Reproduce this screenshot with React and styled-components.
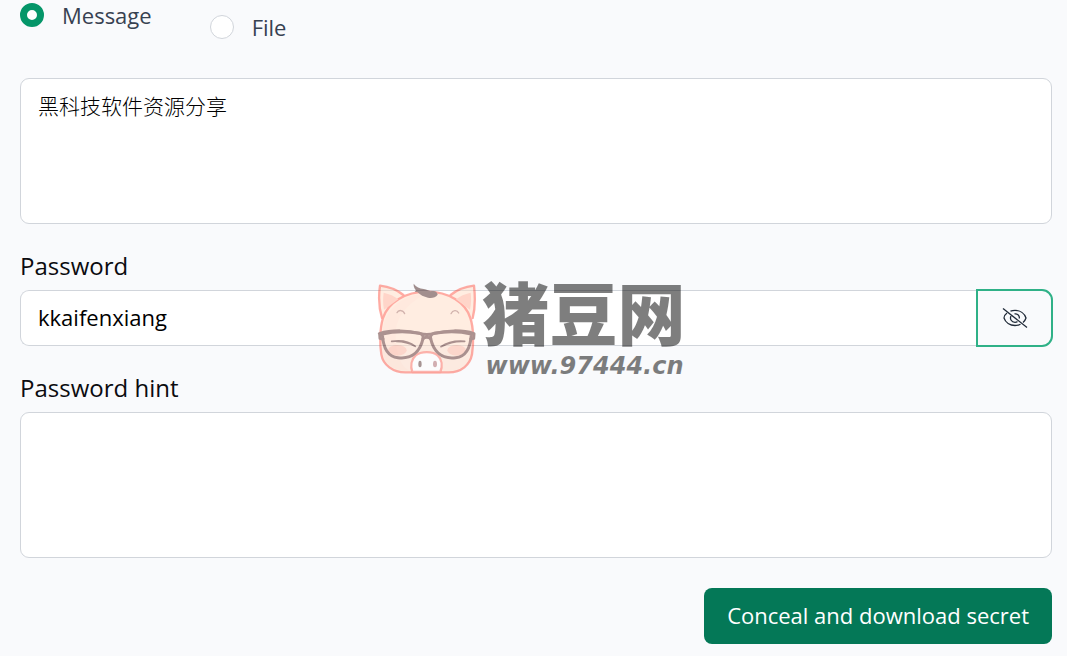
import { useState } from 'react';
import styled, { createGlobalStyle } from 'styled-components';

const GlobalStyle = createGlobalStyle`
  * {
    box-sizing: border-box;
  }

  body {
    margin: 0;
    background-color: #f9fafc;
    font-family: 'Open Sans', 'Noto Sans', 'Noto Sans CJK SC', sans-serif;
  }
`;

const Page = styled.main`
  position: relative;
  min-height: 100vh;
  padding: 0 15px 12px 20px;
  color: #0b0b0f;
`;

const Form = styled.form`
  display: flex;
  flex-direction: column;
`;

const RadioRow = styled.div`
  display: flex;
  align-items: flex-start;
  gap: 58px;
  height: 78px;
`;

const RadioLabel = styled.label`
  display: flex;
  align-items: center;
  gap: 18px;
  margin-top: ${props => (props.$lowered ? '12px' : '0')};
  font-size: 22px;
  line-height: 30px;
  color: #374151;
  cursor: pointer;
`;

const Radio = styled.input`
  appearance: none;
  width: 24px;
  height: 24px;
  margin: 0;
  border: 1px solid #d1d5db;
  border-radius: 50%;
  background-color: white;

  &:checked {
    border: 7px solid #059669;
  }
`;

const TextArea = styled.textarea`
  display: block;
  width: 100%;
  height: 146px;
  padding: 10px 17px;
  border: 1px solid #d1d5db;
  border-radius: 9px;
  background-color: white;
  color: black;
  font-family: 'Noto Sans CJK SC', sans-serif;
  font-size: 21px;
  font-weight: 300;
  line-height: 32px;
  resize: none;
  outline: none;
`;

const FieldLabel = styled.label`
  margin-top: 24px;
  margin-bottom: 6px;
  font-size: 24px;
  line-height: 36px;
`;

const PasswordRow = styled.div`
  display: flex;
  align-items: center;
  height: 56px;
`;

const PasswordInput = styled.input`
  flex: 1;
  min-width: 0;
  height: 56px;
  padding: 0 17px 2px;
  border: 1px solid #d1d5db;
  border-right: none;
  border-radius: 9px 0 0 9px;
  background-color: white;
  color: black;
  font-family: inherit;
  font-size: 22px;
  outline: none;
`;

const ToggleButton = styled.button`
  display: flex;
  align-items: center;
  justify-content: center;
  width: 77px;
  height: 58px;
  margin-right: -1px;
  padding: 0;
  border: 2px solid #2fb187;
  border-radius: 0 11px 11px 0;
  background-color: #f9fafc;
  color: #1f2937;
  cursor: pointer;
`;

const SubmitButton = styled.button`
  align-self: flex-end;
  height: 56px;
  margin-top: 30px;
  padding: 0 23px 2px;
  border: none;
  border-radius: 8px;
  background-color: #047857;
  color: white;
  font-family: inherit;
  font-size: 22px;
  cursor: pointer;

  &:hover {
    background-color: #065f46;
  }
`;

const Watermark = styled.div`
  position: absolute;
  inset: 0;
  display: flex;
  align-items: center;
  justify-content: center;
  padding-top: 4px;
  opacity: 0.5;
  color: black;
  pointer-events: none;
`;

const WatermarkText = styled.div`
  display: flex;
  flex-direction: column;
  width: 216px;
  margin-left: -8px;
  white-space: nowrap;
`;

const SiteName = styled.span`
  font-family: 'Noto Sans CJK SC', sans-serif;
  font-size: 68px;
  font-weight: 900;
  line-height: 72px;
`;

const SiteUrl = styled.span`
  padding-left: 4px;
  font-family: 'DejaVu Sans', sans-serif;
  font-size: 24px;
  font-style: italic;
  font-weight: 700;
  line-height: 38px;
`;

const EyeOffIcon = () => (
  <svg width="26" height="22" viewBox="0 0 26 22" fill="none" stroke="currentColor" strokeWidth="1.3">
    <path d="M5 6C3 7.500 2 9.500 2 11c1.500 4.500 6 7.500 11 7.500 2 0 4-.5 5.500-1.300" />
    <path d="M8.500 4.200C10 3.600 11.500 3.400 13 3.400c5 0 9.500 3 11 7.600-.6 1.900-1.500 3.300-3 4.500" />
    <path d="M9 9c-1.500 3 .5 6.300 4 6.300 1 0 1.700-.2 2.500-.6M12.500 6.900c3-.6 5.300 1.800 4.800 4.600" />
    <path d="M1 1.500 25 20.500" />
  </svg>
);

const PigLogo = () => (
  <svg width="120" height="110" viewBox="0 0 360 330" fill="none" strokeLinecap="round" strokeLinejoin="round">
    <g stroke="#ff4937" strokeOpacity="0.9" strokeWidth="7" fill="#ffdcc5">
      <path d="M36 129C27 100 26 60 30 32c25 3 53 14 70 28M308 129c8-30 7-70 4-97-25 3-53 14-70 28" />
      <path d="M171 50C105 50 55 83 39 129c-10 32-10 80-5 109 5 32 35 54 72 54h130c38 0 64-22 70-54 5-32 5-80-5-109C286 83 237 50 171 50Z" />
    </g>
    <path d="M42 104c-4-20-3-36-1-51 18 4 32 10 44 20M300 104c4-20 4-36 2-51-18 4-32 10-44 20" fill="#ffad95" />
    <path d="M45 135C69 81 117 56 171 56c-60 27-91 70-94 115-1 54 10 100 42 116-42 1-73-12-80-53-4-31-4-70 6-99Z" fill="#ffcdb6" opacity="0.45" />
    <ellipse cx="82" cy="226" rx="28" ry="16" fill="#ff987f" opacity="0.6" />
    <ellipse cx="260" cy="226" rx="28" ry="16" fill="#ff987f" opacity="0.6" />
    <path d="M81 113c4-9 18-9 23 3M243 116c5-11 18-12 23-2" stroke="#a6695d" strokeWidth="4" />
    <path d="M131 26c8 10 17 14 30 16 10 2 16 5 21 7 12-4 20 2 21 10-6 9-18 11-29 9-12-2-24-8-31-16l-9-2 4-4c-5-6-8-12-7-20Z" fill="#48211f" />
    <path d="M127 291c-6-18-3-38 10-50 15-13 52-13 66 0 13 12 15 32 8 50Z" fill="white" stroke="#ff4937" strokeOpacity="0.8" strokeWidth="7" />
    <ellipse cx="150" cy="267" rx="5" ry="10" fill="#57302d" />
    <ellipse cx="195" cy="267" rx="6" ry="10" fill="#ac6569" />
    <g stroke="#5b2824" strokeWidth="9">
      <path d="M37 177c2 36 13 68 47 71 40 5 66-16 75-57 2-8-3-14-10-16-35-6-78-6-112 2ZM304 177c-2 36-13 68-47 71-40 5-66-16-75-57-2-8 3-14 10-16 35-6 78-6 112 2Z" />
      <path d="M28 176c38-12 88-10 121-1 15 5 29 5 44 0 35-9 85-11 119 1M29 176l1 14 9 2M312 176l-1 14-9 2M159 191c6-6 17-6 23 0" />
    </g>
    <path d="M65 199c26-4 52 0 71 15M79 199c20 0 40 5 55 14M284 199c-26-2-51 2-71 16M275 199c-23 0-43 6-59 15" stroke="#57231f" strokeWidth="5" />
  </svg>
);

const App = () => {
  const [kind, setKind] = useState('message');
  const [message, setMessage] = useState('黑科技软件资源分享');
  const [password, setPassword] = useState('kkaifenxiang');
  const [showPassword, setShowPassword] = useState(true);
  const [hint, setHint] = useState('');

  return (
    <Page>
      <GlobalStyle />
      <Form onSubmit={e => e.preventDefault()}>
        <RadioRow role="radiogroup" aria-label="Secret type">
          <RadioLabel>
            <Radio
              type="radio"
              name="kind"
              checked={kind === 'message'}
              onChange={() => setKind('message')}
            />
            Message
          </RadioLabel>
          <RadioLabel $lowered>
            <Radio
              type="radio"
              name="kind"
              checked={kind === 'file'}
              onChange={() => setKind('file')}
            />
            File
          </RadioLabel>
        </RadioRow>

        <TextArea
          aria-label="Message"
          spellCheck={false}
          value={message}
          onChange={e => setMessage(e.target.value)}
        />

        <FieldLabel htmlFor="password">Password</FieldLabel>
        <PasswordRow>
          <PasswordInput
            id="password"
            type={showPassword ? 'text' : 'password'}
            spellCheck={false}
            value={password}
            onChange={e => setPassword(e.target.value)}
          />
          <ToggleButton
            type="button"
            aria-label="Toggle password visibility"
            onClick={() => setShowPassword(!showPassword)}
          >
            <EyeOffIcon />
          </ToggleButton>
        </PasswordRow>

        <FieldLabel htmlFor="hint">Password hint</FieldLabel>
        <TextArea id="hint" value={hint} onChange={e => setHint(e.target.value)} />

        <SubmitButton type="submit">Conceal and download secret</SubmitButton>
      </Form>

      <Watermark>
        <PigLogo />
        <WatermarkText>
          <SiteName>猪豆网</SiteName>
          <SiteUrl>www.97444.cn</SiteUrl>
        </WatermarkText>
      </Watermark>
    </Page>
  );
};

export default App;
